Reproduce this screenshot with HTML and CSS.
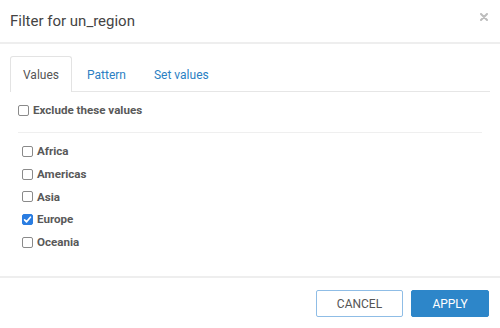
FILE: index.html
```html
<!DOCTYPE html>
<html>
<head>
    <title>Filter for un_region</title>
    <link rel="stylesheet" href="styles.css">
</head>
<body>
    <div class="modal">
        <div class="modal-header">
            <h4 class="modal-title">Filter for un_region</h4>
            <span class="close">
                <svg width="8" height="8" viewBox="0 0 8 8"><path d="M1 1L7 7M7 1L1 7" stroke="#bdbdbd" stroke-width="2" stroke-linecap="round"/></svg>
            </span>
        </div>

        <div class="modal-body">
            <ul class="tabs">
                <li class="tab active">Values</li>
                <li class="tab">Pattern</li>
                <li class="tab">Set values</li>
            </ul>

            <div class="tab-content">
                <label class="check exclude"><span class="box"></span>Exclude these values</label>
                <div class="divider"></div>
                <div class="values">
                    <label class="check"><span class="box"></span>Africa</label>
                    <label class="check"><span class="box"></span>Americas</label>
                    <label class="check"><span class="box"></span>Asia</label>
                    <label class="check"><span class="box checked"><svg width="9" height="9" viewBox="0 0 9 9"><path d="M1.6 4.8L3.6 6.8L7.4 2.2" fill="none" stroke="#fff" stroke-width="1.7" stroke-linecap="round" stroke-linejoin="round"/></svg></span>Europe</label>
                    <label class="check"><span class="box"></span>Oceania</label>
                </div>
            </div>
        </div>

        <div class="modal-footer">
            <button class="btn btn-cancel">CANCEL</button>
            <button class="btn btn-apply">APPLY</button>
        </div>
    </div>
</body>
</html>
```

FILE: styles.css
```css
body {
    margin: 0;
    background: #fff;
    font-family: Roboto, "Liberation Sans", sans-serif;
    color: #555;
}
.modal {
    width: 500px;
    height: 328px;
    display: flex;
    flex-direction: column;
}
.modal-header {
    height: 42px;
    padding: 0 10px;
    display: flex;
    align-items: center;
    justify-content: space-between;
    border-bottom: 2px solid #eee;
}
.modal-title {
    margin: 0;
    font-size: 15px;
    font-weight: 400;
    color: #444;
}
.close {
    display: flex;
    margin-right: 2px;
    margin-top: -8px;
}
.modal-body {
    flex: 1;
    padding: 12px 10px 0;
}
.tabs {
    list-style: none;
    margin: 0;
    padding: 0;
    display: flex;
    height: 35px;
    border-bottom: 1px solid #e6e6e6;
}
.tab {
    padding: 0 12px;
    margin-right: 2px;
    margin-bottom: -1px;
    border: 1px solid transparent;
    border-bottom: none;
    border-radius: 3px 3px 0 0;
    display: flex;
    align-items: center;
    font-size: 12px;
    color: #2b7fc3;
}
.tab.active {
    border-color: #e3e3e3;
    background: #fff;
    color: #555;
}
.tab-content {
    padding: 0 8px;
}
.check {
    display: flex;
    align-items: center;
    font-size: 11.6px;
    font-weight: 700;
    color: #595959;
}
.box {
    width: 9px;
    height: 9px;
    border: 1px solid #8a8a8a;
    border-radius: 2px;
    margin-right: 4px;
    display: flex;
    align-items: center;
    justify-content: center;
}
.box.checked {
    background: #2a7de1;
    border-color: #2a7de1;
}
.exclude {
    height: 36px;
    margin-bottom: 4px;
}
.divider {
    height: 1px;
    background: #efefef;
    margin-bottom: 7px;
}
.values {
    padding-left: 4px;
}
.values .check {
    height: 22.7px;
}
.modal-footer {
    height: 38px;
    border-top: 2px solid #eee;
    padding: 12px 11px 0 0;
    display: flex;
    justify-content: flex-end;
    align-items: flex-start;
    gap: 8px;
}
.btn {
    height: 27px;
    font-family: Roboto, "Liberation Sans", sans-serif;
    font-size: 12px;
    border-radius: 2px;
    cursor: pointer;
}
.btn-cancel {
    width: 87px;
    background: #fff;
    border: 1px solid #8fbde6;
    color: #555;
}
.btn-apply {
    width: 78px;
    background: #2d86c9;
    border: 1px solid #2d86c9;
    color: #fff;
}
```
